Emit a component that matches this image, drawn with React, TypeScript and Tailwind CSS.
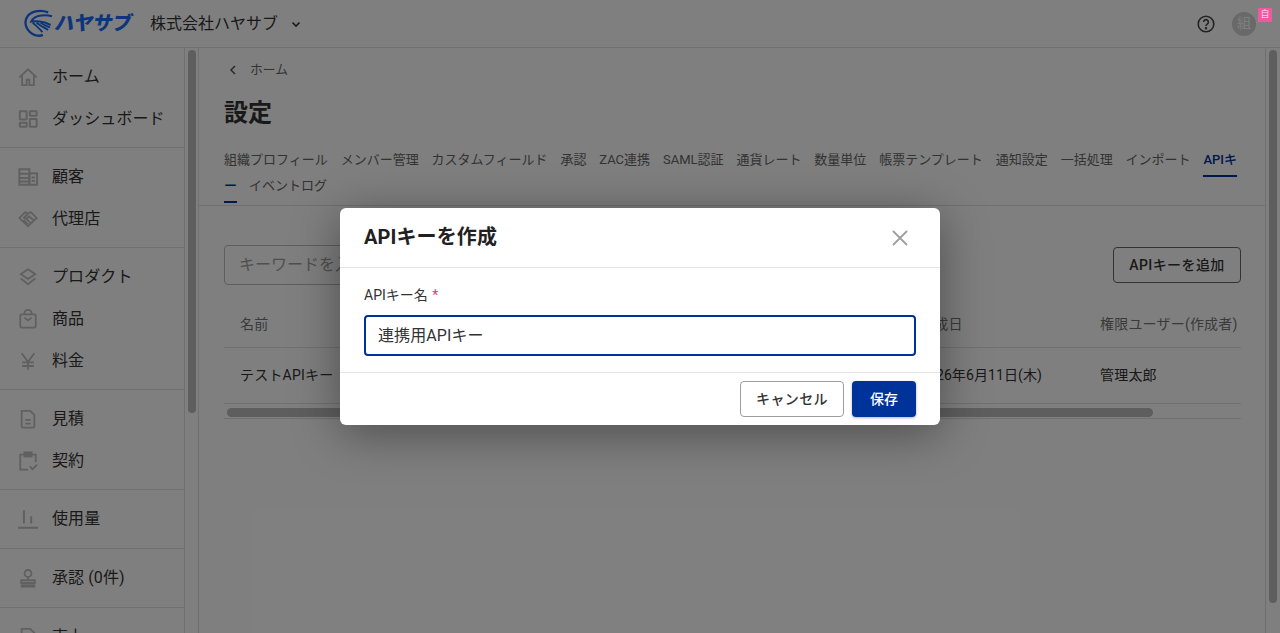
import React from "react";

const font = "font-['Roboto','Noto_Sans_CJK_JP',sans-serif]";

const I = ({ children, sw = 2 }: { children: React.ReactNode; sw?: number }) => (
  <svg width="20" height="20" viewBox="0 0 22 22" fill="none" stroke="#c0c0c0" strokeWidth={sw} className="shrink-0">
    {children}
  </svg>
);

const icons: Record<string, React.ReactNode> = {
  home: <I><path d="M1.5 11.5 11 2.5l9.5 9M4.5 9.5V20h5v-6h3v6h5V9.5" /></I>,
  dash: <I sw={2.2}><rect x="2" y="2.5" width="7.5" height="9" rx=".5" /><rect x="13" y="2.5" width="7.5" height="5" rx=".5" /><rect x="2" y="15" width="7.5" height="4.5" rx=".5" /><rect x="13" y="11" width="7.5" height="8.5" rx=".5" /></I>,
  building: <I sw={2.2}><rect x="1.5" y="2.5" width="11" height="17" /><rect x="12.5" y="7" width="8.5" height="12.5" /><path d="M2 7.5h10M2 12h10M2 16h10M15 11.5h3.5M15 15.5h3.5" /></I>,
  partner: <I sw={2}><path d="M1.5 10 8 3.5l3 1.5 3-1.5 6.5 6.5-9.5 9z" /><path d="M11 5 6.5 9.5 9 11l3-3 6 5M6 12l5 5M9 10.5l5 5" /></I>,
  layers: <I><path d="M11 2.5l8 5.5-8 5-8-5z" /><path d="M3 12.5l8 6.5 8-6.5" /></I>,
  bag: <I><rect x="2.5" y="6" width="17" height="14.5" rx="1.5" /><path d="M7 6V5a4 4 0 0 1 8 0v1M7 9.5l4 3 4-3" /></I>,
  yen: <I><path d="M4 2.5l7 9.5 7-9.5M11 12v8.5M4.5 12.5h13M4.5 16.5h13" /></I>,
  doc: <I><path d="M4 2h9.5L18 6.5V19a1.5 1.5 0 0 1-1.5 1.5h-11A1.5 1.5 0 0 1 4 19z" /><path d="M8 12h6M8 16h6" /></I>,
  clip: <I><path d="M7 4H2.5v16.5H11M15 4h4.5v8" /><rect x="7" y="1.5" width="8" height="4.5" fill="#c0c0c0" /><path d="M13 17l3 3 5-5" /></I>,
  chart: <I sw={2.2}><path d="M0 20.5h22M6.5 1.5V16M14.5 8v8" /></I>,
  stamp: <I><circle cx="11" cy="6" r="3.8" /><path d="M11 10v3" /><path d="M3.5 13.5h15v3h-15z" /><rect x="3" y="18" width="16" height="3.5" fill="#c0c0c0" stroke="none" /></I>,
};

const groups: { pb: string; items: [string, string][] }[] = [
  { pb: "pb-[7px]", items: [["home", "ホーム"], ["dash", "ダッシュボード"]] },
  { pb: "pb-[7px]", items: [["building", "顧客"], ["partner", "代理店"]] },
  { pb: "pb-[7px]", items: [["layers", "プロダクト"], ["bag", "商品"], ["yen", "料金"]] },
  { pb: "pb-[7px]", items: [["doc", "見積"], ["clip", "契約"]] },
  { pb: "pb-[8px]", items: [["chart", "使用量"]] },
  { pb: "pb-[8px]", items: [["stamp", "承認 (0件)"]] },
  { pb: "pb-[7px]", items: [["doc", "売上"]] },
];

const tabs = ["組織プロフィール", "メンバー管理", "カスタムフィールド", "承認", "ZAC連携", "SAML認証", "通貨レート", "数量単位", "帳票テンプレート", "通知設定", "一括処理", "インポート"];

export default function App() {
  return (
    <div className={`${font} relative flex h-[633px] w-[1280px] flex-col overflow-hidden bg-white text-[#333]`}>
      {/* header */}
      <header className="flex h-[48px] shrink-0 items-center border-b border-[#e0e0e0] pl-[24px] pr-[24px]">
        <svg width="29" height="29" viewBox="0 0 30 30" fill="none" stroke="#1a6cf5" className="shrink-0">
          <path d="M25 3.5C17 .5 6 2 2.5 9.5c-3 7 1.5 15 9 17.5 3.500 1 6 .8 8-.2" strokeWidth="2.4" />
          <path d="M29 7.500 C20 5 10 7 7.500 13c5-1 10 0 14 1 2 .6 4 1.600 6 2.500" strokeWidth="2.2" />
          <path d="M9 14c3 3 7 6 10 10M13 14c3 3 7 5 12 7.500M17 14c3 2 6 4 10 5" strokeWidth="2" />
        </svg>
        <span className="ml-[2px] w-[95px] origin-left -skew-x-12 text-[19.5px] font-black leading-none tracking-[-0.3px] text-[#1a6cf5]">ハヤサブ</span>
        <span className="text-[16px] text-[#333]">株式会社ハヤサブ</span>
        <svg width="12" height="12" viewBox="0 0 12 12" fill="none" stroke="#333" strokeWidth="1.6" className="ml-[12px]"><path d="M2.500 4.500 6 8l3.500-3.500" /></svg>
        <div className="ml-auto flex items-center">
          <svg width="18" height="18" viewBox="0 0 18 18" fill="none" stroke="#444" strokeWidth="1.6" className="mr-[17px]">
            <circle cx="9" cy="9" r="7.800" />
            <path d="M6.600 7a2.400 2.400 0 1 1 3.600 2.100c-.8.5-1.200.9-1.200 1.900" />
            <circle cx="9" cy="13.300" r=".5" fill="#444" />
          </svg>
          <div className="relative flex h-[24px] w-[24px] items-center justify-center rounded-full bg-[#d2d2d2] text-[14px] text-white">
            組
            <span className="absolute left-[26px] top-[-4px] z-10 flex h-[14px] w-[14px] items-center justify-center rounded-[1px] bg-[#ee5a9e] text-[9px] leading-none text-[#ffd0e4]">自</span>
          </div>
        </div>
      </header>

      <div className="flex min-h-0 flex-1">
        {/* sidebar */}
        <aside className="flex w-[199px] shrink-0 border-r border-[#e0e0e0]">
          <nav className="w-[185px] shrink-0 border-r border-[#e0e0e0]">
            {groups.map((g, i) => (
              <div key={i} className={`${g.pb} border-b border-[#e0e0e0] pt-[8px]`}>
                {g.items.map(([ic, label]) => (
                  <div key={label} className="flex h-[42px] items-center gap-[14px] pl-[18px] text-[16px] tracking-[0.1px] text-[#333]">
                    {icons[ic]}
                    <span className="whitespace-nowrap">{label}</span>
                  </div>
                ))}
              </div>
            ))}
          </nav>
          <div className="flex-1 px-[3px] pt-[2px]">
            <div className="h-[363px] w-[8px] rounded-full bg-[#bdbdbd]" />
          </div>
        </aside>

        {/* main */}
        <main className="flex min-w-0 flex-1">
          <div className="w-[1066px] shrink-0">
            <div className="flex h-[42px] items-center gap-[12px] pl-[30px] pt-[1px] text-[12.8px] text-[#666]">
              <svg width="8" height="10" viewBox="0 0 8 10" fill="none" stroke="#555" strokeWidth="1.5"><path d="M6 1 2 5l4 4" /></svg>
              <span className="ml-[1px]">ホーム</span>
            </div>
            <h1 className="mt-[5px] pl-[25px] text-[24px] font-bold leading-[36px] text-[#333]">設定</h1>
            <div className="mt-[16px] border-b border-[#e0e0e0] pb-[6px] pl-[25px] pr-[24px] text-[13px] leading-[26px] text-[#666]">
              <div className="w-[1018px]">
                {tabs.map((t) => (
                  <span key={t} className="mr-[12.9px] whitespace-nowrap">{t}</span>
                ))}
                <span className="mr-[12px] border-b-2 border-[#003399] pb-[8px] font-medium text-[#003399] [box-decoration-break:slice]">APIキー</span>
                <span className="whitespace-nowrap">イベントログ</span>
              </div>
            </div>
            <div className="mt-[39px] pl-[25px] pr-[24px]">
              <div className="flex items-center justify-between">
                <div className="flex h-[40px] w-[300px] items-center rounded-[4px] border border-[#bdbdbd] pl-[14px] text-[16px] text-[#9e9e9e]">キーワードを入力</div>
                <button className="flex h-[36px] w-[128px] items-center justify-center rounded-[4px] border border-[#666] text-[14px] font-medium tracking-[0.4px] text-[#333]">APIキーを追加</button>
              </div>
              <div className="mt-[22px] text-[14px] tracking-[0.2px]">
                <div className="flex h-[41px] items-center border-b border-[#e0e0e0] pb-[5px] text-[#757575]">
                  <span className="w-[696px] pl-[16px]">名前</span>
                  <span className="w-[180px] whitespace-nowrap">作成日</span>
                  <span className="whitespace-nowrap">権限ユーザー(作成者)</span>
                </div>
                <div className="flex h-[56px] items-center border-b border-[#e0e0e0] text-[#333]">
                  <span className="w-[696px] pl-[16px]">テストAPIキー</span>
                  <span className="w-[180px] whitespace-nowrap tracking-[0.1px]">2026年6月11日(木)</span>
                  <span className="whitespace-nowrap">管理太郎</span>
                </div>
                <div className="border-b border-[#e0e0e0] pb-[1px] pl-[3px] pt-[4px]">
                  <div className="h-[9px] w-[926px] rounded-full bg-[#bdbdbd]" />
                </div>
              </div>
            </div>
          </div>
          <div className="flex-1 border-l border-[#e0e0e0] pl-[3px] pt-[2px]">
            <div className="h-[553px] w-[8px] rounded-full bg-[#bdbdbd]" />
          </div>
        </main>
      </div>

      {/* overlay */}
      <div className="absolute inset-0 bg-black/50" />

      {/* modal */}
      <div className="absolute left-[340px] top-[208px] z-20 w-[600px] rounded-[6px] bg-white shadow-[0_8px_48px_rgba(0,0,0,0.4)]">
        <div className="flex h-[60px] items-center justify-between border-b border-[#e5e5e5] pb-[2px] pl-[24px] pr-[31px]">
          <h2 className="text-[20px] font-bold tracking-[0.1px] text-[#212121]">APIキーを作成</h2>
          <svg width="18" height="18" viewBox="0 0 18 18" fill="none" stroke="#9e9e9e" strokeWidth="1.8" className="mt-[2px]"><path d="M2 2l14 14M16 2 2 16" /></svg>
        </div>
        <div className="h-[105px] border-b border-[#e5e5e5] px-[24px] pt-[17px]">
          <div className="text-[14px] leading-[20px] text-[#333]">APIキー名 <span className="ml-[1px] text-[#e0417f]">*</span></div>
          <div className="mt-[10px] flex h-[41px] items-center rounded-[4px] border-[2px] border-[#003399] pl-[12px] text-[16px] tracking-[0.1px] text-[#333]">連携用APIキー</div>
        </div>
        <div className="flex h-[52px] items-center justify-end gap-[8px] pr-[24px]">
          <button className="flex h-[36px] w-[104px] items-center justify-center rounded-[4px] border border-[#9e9e9e] text-[14px] font-medium tracking-[0.4px] text-[#333]">キャンセル</button>
          <button className="flex h-[36px] w-[64px] items-center justify-center rounded-[4px] bg-[#003399] text-[14px] font-medium text-white shadow-[0_1px_3px_rgba(0,0,0,0.3)]">保存</button>
        </div>
      </div>
    </div>
  );
}
